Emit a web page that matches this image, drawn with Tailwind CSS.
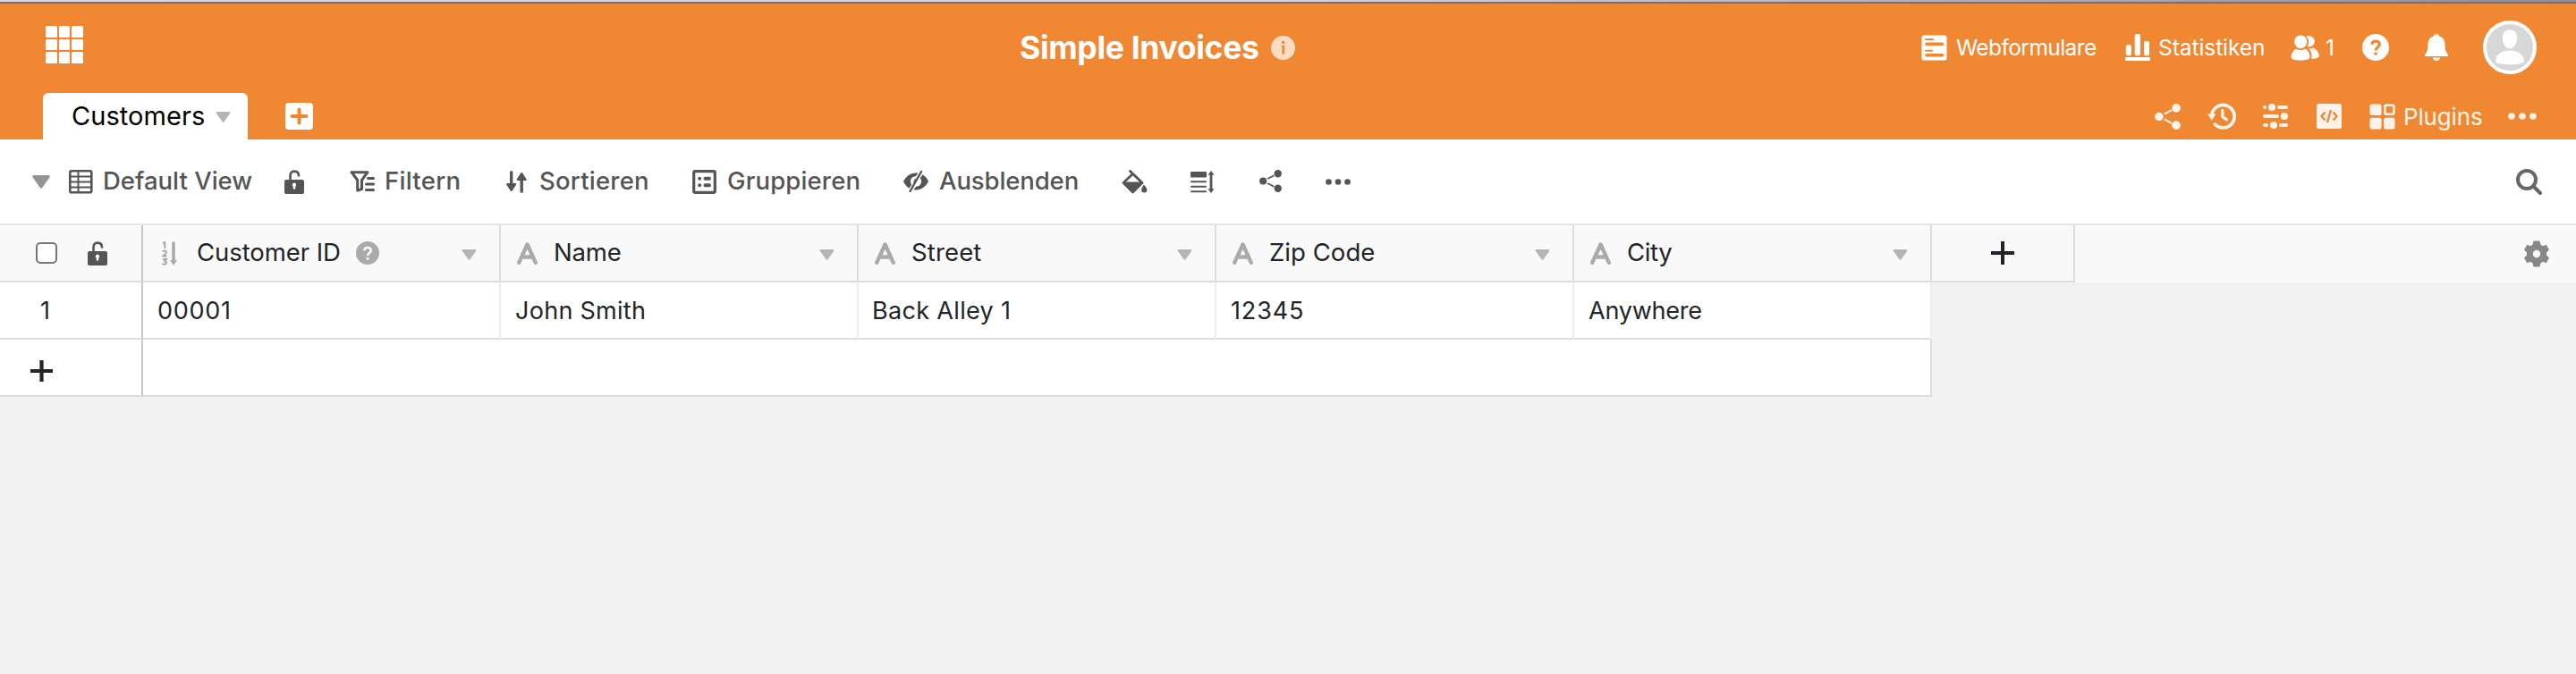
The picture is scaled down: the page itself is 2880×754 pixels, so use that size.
<!DOCTYPE html>
<html lang="de">
<head>
<meta charset="utf-8">
<title>Simple Invoices</title>
<script src="https://cdn.jsdelivr.net/npm/@tailwindcss/browser@4"></script>
</head>
<body class="w-[2880px] h-[754px] overflow-hidden bg-[#f2f2f2] font-['Inter',sans-serif] text-[#212529] whitespace-nowrap">

<svg class="hidden">
  <symbol id="caret" viewBox="0 0 20 15"><path d="M1.6 0H18.4Q20.6 .6 19.4 2.6L11.2 14Q10 15.4 8.800 14L.6 2.600Q-.6 .6 1.600 0Z"/></symbol>
  <symbol id="share" viewBox="0 0 28 28"><path d="M5 14 23 4.500M5 14 23 23.500" stroke="currentColor" stroke-width="2" stroke-dasharray="0 6 9 20" fill="none"/><circle cx="4.700" cy="14" r="4.600"/><circle cx="23.200" cy="4.700" r="4.700"/><circle cx="23.200" cy="23.300" r="4.700"/></symbol>
  <symbol id="dots" viewBox="0 0 32 8"><circle cx="4" cy="4" r="3.800"/><circle cx="16" cy="4" r="3.800"/><circle cx="28" cy="4" r="3.800"/></symbol>
  <symbol id="lock" viewBox="0 0 22 27"><path d="M6.500 12V7Q6.500 1.600 11.200 1.600T16 6.500V7.500" fill="none" stroke="currentColor" stroke-width="2.600"/><path fill-rule="evenodd" d="M2 11H20Q22 11 22 13V25Q22 27 20 27H2Q0 27 0 25V13Q0 11 2 11ZM11 14.500A2.300 2.300 0 0 0 9.800 18.700V21.600H12.200V18.700A2.300 2.300 0 0 0 11 14.500Z"/></symbol>
  <symbol id="letter" viewBox="0 0 23 25"><path d="M2.200 22.800 11.500 2.500 20.800 22.800M6 16.500H17" fill="none" stroke="currentColor" stroke-width="4.400" stroke-linecap="round" stroke-linejoin="round"/></symbol>
</svg>

<div class="h-[2px] bg-linear-to-r from-[#d8d8d8] via-[#d4d4d4] to-[#909090]"></div>
<div class="h-[2px] bg-[#717275]"></div>

<header class="h-[152px] bg-[#f08833] text-white fill-current">
  <div class="flex h-[98px] items-center pl-[51px]">
    <div class="w-[1089px] shrink-0">
      <div class="-mt-[6px] grid size-[42px] grid-cols-3 gap-[2px]">
        <i class="rounded-[1.5px] bg-white"></i><i class="rounded-[1.5px] bg-white"></i><i class="rounded-[1.5px] bg-white"></i>
        <i class="rounded-[1.5px] bg-white"></i><i class="rounded-[1.5px] bg-white"></i><i class="rounded-[1.5px] bg-white"></i>
        <i class="rounded-[1.5px] bg-white"></i><i class="rounded-[1.5px] bg-white"></i><i class="rounded-[1.5px] bg-white"></i>
      </div>
    </div>
    <h1 class="w-[281px] shrink-0 pt-[2px] text-[35.5px] font-bold tracking-[-0.31px]">Simple Invoices</h1>
    <div class="w-[727px] shrink-0">
      <svg class="mt-px size-[27px]" viewBox="0 0 27 27"><circle cx="13.500" cy="13.500" r="13.500" fill="#fadcc3"/><g fill="#f08833"><circle cx="13.700" cy="7.500" r="1.700"/><path d="M11.700 10.800H15.200V20.500H12.400V12.500H11.700Z"/></g></svg>
    </div>
    <div class="w-[39px] shrink-0">
      <svg class="size-[29px]" viewBox="0 0 29 29"><rect x=".5" y=".5" width="28" height="28" rx="2.500"/><g stroke="#f08833" stroke-linecap="round"><path d="M5 5H13M5 17.700H12" stroke-width="2"/><path d="M6 10.300H23.500M6 22.800H23.500" stroke-width="3.600"/></g></svg>
    </div>
    <span class="w-[189px] shrink-0 text-[24.500px] tracking-[-0.57px]">Webformulare</span>
    <div class="w-[37px] shrink-0">
      <svg class="h-[30px] w-[28px]" viewBox="0 0 28 30"><rect y="26" width="28" height="4" rx=".6"/><rect x=".8" y="12" width="6" height="12.300" rx="2"/><rect x="10.700" y="0" width="6.200" height="24.300" rx="2"/><rect x="21" y="8" width="6" height="16.300" rx="2"/></svg>
    </div>
    <span class="w-[148px] shrink-0 text-[24.500px] tracking-[-0.06px]">Statistiken</span>
    <div class="w-[39px] shrink-0">
      <svg class="h-[29px] w-[32px]" viewBox="0 0 32 29"><path d="M11.200 .5C15.300 .5 18.200 3.400 18.200 7.500C18.200 11.900 15 15.200 11.200 15.200S4.200 11.900 4.200 7.500C4.200 3.400 7.100 .5 11.200 .5ZM5.800 15.800Q11 18.500 16.500 15.800C20 18 21.500 21.200 21.500 25C21.500 27.500 16.500 28.500 11 28.500S.5 27.500 .5 25C.5 21.200 2.500 17.800 5.800 15.800ZM17 1.700C22.500 .3 26.800 3 26.800 7.300C26.800 10.700 24 13.300 20.700 13.400L18.500 12.500C21.300 9 20.800 4.500 17 1.700ZM19.800 15.300C22 16 23.600 15.600 25.300 14.500C29.500 16.600 31.500 19.800 31.800 23.200C31.800 25.600 28 26.800 23.300 26.900C24.200 22 23 18.300 19.800 15.300Z"/></svg>
    </div>
    <span class="w-[41px] shrink-0 text-[24.500px]">1</span>
    <div class="w-[70px] shrink-0">
      <svg class="size-[30px]" viewBox="0 0 30 30"><circle cx="15" cy="15" r="15"/><path d="M11 11.800C11 9.700 12.600 8.200 15.200 8.200S19.300 9.700 19.300 11.800C19.300 14.500 15.200 14.600 15.200 18.500" fill="none" stroke="#f08833" stroke-width="3.200"/><rect x="13.400" y="20.500" width="3.400" height="3" fill="#f08833"/></svg>
    </div>
    <div class="w-[65px] shrink-0">
      <svg class="h-[30px] w-[26px]" viewBox="0 0 26 30"><path d="M13 0C14.800 0 16 1.200 16 2.500C20.500 3.800 22.500 7 22.500 11.500C22.500 17.500 23 19 26 23.300V25H0V23.300C3 19 3.500 17.500 3.500 11.500C3.500 7 5.500 3.800 10 2.500C10 1.200 11.200 0 13 0ZM8.800 26.500H17.200Q16 30 13 30T8.800 26.500Z"/></svg>
    </div>
    <svg class="size-[60px] shrink-0" viewBox="0 0 60 60"><circle cx="30" cy="30" r="28" fill="#d7d7d7" stroke="#fff" stroke-width="4"/><path d="M30 10.200C35 10.200 38.200 14 38.200 19.500C38.200 26 34.500 31.300 30 31.300S21.800 26 21.800 19.500C21.800 14 25 10.200 30 10.200ZM30 33.500C40 33.500 46 39 46 45C46 48 39 49.200 30 49.200S14 48 14 45C14 39 20 33.500 30 33.500Z"/></svg>
  </div>

  <div class="mt-[2px] flex h-[52px] items-center pl-[48px]">
    <div class="flex h-full w-[229px] shrink-0 items-center rounded-t-[6px] bg-white pl-[32px] text-black">
      <span class="w-[161px] text-[29px] tracking-[0.07px]">Customers</span>
      <svg class="mt-px h-[12px] w-[17px] text-[#b5b5b5] fill-current"><use href="#caret"/></svg>
    </div>
    <svg class="ml-[42px] h-[30px] w-[31px] shrink-0" viewBox="0 0 31 30"><rect width="31" height="30" rx="4"/><path d="M15.500 7.500V22.500M7.500 15H23.500" stroke="#f08833" stroke-width="4" stroke-linecap="round"/></svg>
    <div class="ml-[2059px] flex items-center opacity-90">
      <div class="w-[59px] shrink-0"><svg class="size-[29px]"><use href="#share"/></svg></div>
      <div class="w-[62px] shrink-0">
        <svg class="h-[30px] w-[32px]" viewBox="0 0 32 30"><path d="M4.800 14A12.700 12.700 0 1 1 8.300 24" fill="none" stroke="currentColor" stroke-width="3.800" stroke-linecap="round"/><path d="M0 12.500H9.500L4.800 19.500Z"/><path d="M16.800 8.500V15.500L21.500 19" fill="none" stroke="currentColor" stroke-width="3.400" stroke-linecap="round" stroke-linejoin="round"/></svg>
      </div>
      <div class="w-[60px] shrink-0">
        <svg class="size-[28px]" viewBox="0 0 28 28"><g stroke="currentColor" stroke-width="4" stroke-linecap="round"><path d="M2 4H2.100M18 4H26M2 14H16M2 24H4M20 24H26"/></g><circle cx="10" cy="4" r="4"/><circle cx="23.900" cy="14" r="4.100"/><circle cx="12" cy="24" r="4"/></svg>
      </div>
      <div class="w-[59px] shrink-0">
        <svg class="size-[28px]" viewBox="0 0 28 28"><rect width="28" height="28" rx="2.500"/><path d="M9.500 9.500 5.500 14 9.500 18.500M18.500 9.500 22.500 14 18.500 18.500M16 7 12 21" fill="none" stroke="#f08833" stroke-width="2.400"/></svg>
      </div>
      <div class="w-[38px] shrink-0">
        <svg class="size-[29px]" viewBox="0 0 29 29"><rect x=".5" y=".5" width="13" height="12.500" rx="2.500"/><rect x=".5" y="15.700" width="13" height="12.800" rx="2.500"/><rect x="16" y="15.700" width="12.500" height="12.800" rx="2.500"/><rect x="17.300" y="1.800" width="10" height="10" rx="1.500" fill="none" stroke="currentColor" stroke-width="2.600"/></svg>
      </div>
      <span class="w-[117px] shrink-0 text-[26px] tracking-[-0.15px]">Plugins</span>
      <svg class="h-[8px] w-[32px]"><use href="#dots"/></svg>
    </div>
  </div>
</header>

<nav class="flex h-[94px] items-center bg-white pl-[36px] text-[27.500px] font-medium text-[#555] fill-current">
  <div class="w-[41px] shrink-0"><svg class="h-[15px] w-[20px] text-[#949494] fill-current"><use href="#caret"/></svg></div>
  <div class="w-[38px] shrink-0">
    <svg class="size-[27px]" viewBox="0 0 27 27"><rect x="1.300" y="1.300" width="24" height="24" rx="1.500" fill="none" stroke="currentColor" stroke-width="2.600"/><path d="M2 7.500H25M2 13.500H25M2 19.500H25" stroke="currentColor" stroke-width="2.200"/><path d="M10.500 2V25" stroke="currentColor" stroke-width="2"/></svg>
  </div>
  <span class="w-[203px] shrink-0">Default View</span>
  <div class="w-[73px] shrink-0"><svg class="h-[27px] w-[22px]"><use href="#lock"/></svg></div>
  <div class="w-[39px] shrink-0">
    <svg class="h-[24px] w-[29px]" viewBox="0 0 29 24"><path d="M2 1.700H20L13.500 10.500V20.500L8.700 22V10.500Z" fill="none" stroke="currentColor" stroke-width="3" stroke-linejoin="round"/><path d="M20.500 8.500H26.500M18.500 15H26.500M18.500 21.500H26.500" stroke="currentColor" stroke-width="3" stroke-linecap="round"/></svg>
  </div>
  <span class="w-[136px] shrink-0 tracking-[0.3px]">Filtern</span>
  <div class="w-[37px] shrink-0">
    <svg class="h-[25px] w-[23px]" viewBox="0 0 23 25"><path d="M4 1.500Q4 .3 5.700 .3T7.400 1.500V14H10.700Q11.500 14.800 11 15.800L6.800 22.300Q5.700 23.500 4.600 22.300L.4 15.800Q-.1 14.800 .7 14H4ZM15.500 23.500Q15.500 24.700 17.200 24.700T18.900 23.500V11H22.200Q23 10.200 22.500 9.200L18.300 2.700Q17.200 1.500 16.100 2.700L11.900 9.200Q11.400 10.200 12.200 11H15.500Z"/></svg>
  </div>
  <span class="w-[171px] shrink-0 tracking-[0.23px]">Sortieren</span>
  <div class="w-[39px] shrink-0">
    <svg class="size-[27px]" viewBox="0 0 27 27"><rect x="1.700" y="1.700" width="23.600" height="23.600" rx="1.500" fill="none" stroke="currentColor" stroke-width="3.200"/><circle cx="8.200" cy="9.700" r="2"/><circle cx="8.200" cy="17.300" r="2"/><path d="M14.500 9.700H19M14.500 17.300H19" stroke="currentColor" stroke-width="4" stroke-linecap="round"/></svg>
  </div>
  <span class="w-[197px] shrink-0 tracking-[0.15px]">Gruppieren</span>
  <div class="w-[40px] shrink-0">
    <svg class="h-[24px] w-[28px]" viewBox="0 0 28 24"><path d="M0 12Q5 2.500 14 2.500H16.500L13.800 6.300Q8 6.500 8 12Q8 14.500 9.200 16L6.200 19.700Q2 16.800 0 12ZM28 12Q23 21.500 14 21.500H11.500L14 17.700Q20 17.500 20 12Q20 9.500 18.800 8L21.800 4.300Q26 7.200 28 12ZM15.500 8.500Q11 9 11.500 13.800Z"/><path d="M20 1 7.500 23" stroke="currentColor" stroke-width="2.400" stroke-linecap="round"/></svg>
  </div>
  <span class="w-[204px] shrink-0 tracking-[-0.11px]">Ausblenden</span>
  <div class="w-[77px] shrink-0">
    <svg class="h-[27px] w-[29px]" viewBox="0 0 29 27"><path d="M9.500 1.500 23 14.500 12.500 25 2 14.500 12.500 4.500" fill="none" stroke="currentColor" stroke-width="2.800" stroke-linejoin="round" stroke-linecap="round"/><path d="M2 13.500H23L12.500 25.500ZM24.800 16.500Q28.500 20.500 28.500 23Q28 25.500 25.300 25.500T22 23Q22.300 20 24.800 16.500Z"/></svg>
  </div>
  <div class="w-[77px] shrink-0">
    <svg class="h-[25px] w-[27px]" viewBox="0 0 27 25"><rect y="1" width="18" height="6.500" rx="1"/><path d="M1 12.200H17M1 17.700H17M1 23.200H17" stroke="currentColor" stroke-width="2" stroke-linecap="round"/><path d="M23 3V22" stroke="currentColor" stroke-width="2.800"/><path d="M23 0 26.500 4.800H19.500ZM23 25 26.500 20.200H19.500Z"/></svg>
  </div>
  <div class="w-[74px] shrink-0"><svg class="mb-px size-[25px]"><use href="#share"/></svg></div>
  <div class="w-[1331px] shrink-0"><svg class="h-[7px] w-[28px]"><use href="#dots"/></svg></div>
  <svg class="size-[29px] shrink-0 text-[#666]" viewBox="0 0 29 29" fill="none" stroke="currentColor"><circle cx="12" cy="12" r="10" stroke-width="4"/><path d="M19.500 19.500 27 27" stroke-width="4" stroke-linecap="round"/></svg>
</nav>

<main class="border-t-2 border-[#e5e8eb] text-[27px] fill-current">
  <div class="flex h-[64px] bg-[#f9f9f9] text-[27.500px]">
    <div class="flex w-[160px] shrink-0 items-center border-r-2 border-b-2 border-[#ddd] border-r-[#c9c9c9] pl-[40px]">
      <div class="size-[24px] rounded-[5px] border-2 border-[#767676] bg-white"></div>
      <svg class="ml-[34px] h-[27px] w-[22px] text-[#555]"><use href="#lock"/></svg>
    </div>
    <div class="flex w-[400px] shrink-0 items-center border-r-2 border-b-2 border-[#ddd] pl-[21px]">
      <div class="w-[39px] shrink-0 text-[#aaa]">
        <svg class="h-[27px] w-[18px]" viewBox="0 0 18 27"><path d="M1 2.200 3.200 1V8M.8 11.800Q1.200 10.600 3 10.600T5 12Q5 13.200 1 16.600H5.500M1 20H5L3.200 22.200Q5.200 22.600 5 24.200T2.900 25.700T.7 24.600" fill="none" stroke="currentColor" stroke-width="2"/><path d="M13 2V22" stroke="currentColor" stroke-width="3.600" stroke-linecap="round"/><path d="M9 21H17L13 27Z"/></svg>
      </div>
      <span class="w-[178px] shrink-0 tracking-[-0.07px]">Customer ID</span>
      <svg class="size-[26px] text-[#aaa]" viewBox="0 0 26 26"><circle cx="13" cy="13" r="13"/><path d="M9.300 10.200C9.300 8.200 10.800 7 13.100 7S16.800 8.300 16.800 10.200C16.800 12.800 13.100 13 13.100 16.300" fill="none" stroke="#f9f9f9" stroke-width="2.600"/><rect x="11.700" y="18" width="2.800" height="2.600" fill="#f9f9f9"/></svg>
      <svg class="mt-[3px] mr-[25px] ml-auto h-[12px] w-[17px] text-[#b5b5b5] fill-current"><use href="#caret"/></svg>
    </div>
    <div class="flex w-[400px] shrink-0 items-center border-r-2 border-b-2 border-[#ddd] pl-[18px]">
      <svg class="mr-[18px] h-[25px] w-[23px] text-[#aaa]"><use href="#letter"/></svg><span class="tracking-[-0.18px]">Name</span>
      <svg class="mt-[3px] mr-[25px] ml-auto h-[12px] w-[17px] text-[#b5b5b5] fill-current"><use href="#caret"/></svg>
    </div>
    <div class="flex w-[400px] shrink-0 items-center border-r-2 border-b-2 border-[#ddd] pl-[18px]">
      <svg class="mr-[18px] h-[25px] w-[23px] text-[#aaa]"><use href="#letter"/></svg><span class="tracking-[0.14px]">Street</span>
      <svg class="mt-[3px] mr-[25px] ml-auto h-[12px] w-[17px] text-[#b5b5b5] fill-current"><use href="#caret"/></svg>
    </div>
    <div class="flex w-[400px] shrink-0 items-center border-r-2 border-b-2 border-[#ddd] pl-[18px]">
      <svg class="mr-[18px] h-[25px] w-[23px] text-[#aaa]"><use href="#letter"/></svg><span class="tracking-[0.05px]">Zip Code</span>
      <svg class="mt-[3px] mr-[25px] ml-auto h-[12px] w-[17px] text-[#b5b5b5] fill-current"><use href="#caret"/></svg>
    </div>
    <div class="flex w-[400px] shrink-0 items-center border-r-2 border-b-2 border-[#ddd] pl-[18px]">
      <svg class="mr-[18px] h-[25px] w-[23px] text-[#aaa]"><use href="#letter"/></svg><span class="tracking-[-0.33px]">City</span>
      <svg class="mt-[3px] mr-[25px] ml-auto h-[12px] w-[17px] text-[#b5b5b5] fill-current"><use href="#caret"/></svg>
    </div>
    <div class="flex w-[160px] shrink-0 items-center justify-center border-r-2 border-b-2 border-[#ddd]">
      <svg class="size-[26px]" viewBox="0 0 26 26"><path d="M13 0V26M0 13H26" stroke="currentColor" stroke-width="4"/></svg>
    </div>
    <svg class="mt-[17px] ml-[502px] h-[30px] w-[28px] shrink-0 text-[#888]" viewBox="-14 -15 28 30"><path fill-rule="evenodd" d="M-3.500 -14.500H3.500L4.500 -10.200 7 -8.800 10.800 -10.200 14 -4.500 11 -1.500V1.500L14 4.500 10.800 10.200 7 8.800 4.500 10.200 3.500 14.500H-3.500L-4.500 10.200 -7 8.800 -10.800 10.200 -14 4.500 -11 1.500V-1.500L-14 -4.500 -10.800 -10.200 -7 -8.800 -4.500 -10.200ZM0 -4.200A4.200 4.200 0 1 0 0 4.200A4.200 4.200 0 1 0 0 -4.200Z"/></svg>
  </div>

  <div class="flex h-[64px] w-[2160px] *:flex *:shrink-0 *:items-center *:border-b-2 *:bg-white *:pt-[2px]">
    <div class="w-[160px] border-r-2 border-[#ddd] border-r-[#c9c9c9] pl-[45px]">1</div>
    <div class="w-[400px] border-r-2 border-[#ddd] border-r-[#eee] pl-[16px] tracking-[0.72px]">00001</div>
    <div class="w-[400px] border-r-2 border-[#ddd] border-r-[#eee] pl-[16px] tracking-[0.28px]">John Smith</div>
    <div class="w-[400px] border-r-2 border-[#ddd] border-r-[#eee] pl-[15px] tracking-[0.33px]">Back Alley 1</div>
    <div class="w-[400px] border-r-2 border-[#ddd] border-r-[#eee] pl-[16px] tracking-[0.86px]">12345</div>
    <div class="w-[400px] border-r-2 border-[#ddd] border-r-[#eee] pl-[16px] tracking-[-0.23px]">Anywhere</div>
  </div>

  <div class="flex h-[64px] w-[2160px]">
    <div class="flex w-[160px] shrink-0 items-center border-r-2 border-b-2 border-[#ddd] border-r-[#c9c9c9] bg-white pt-[8px] pl-[34px]">
      <svg class="h-[24px] w-[25px]" viewBox="0 0 25 24"><path d="M12.500 0V24M0 12H25" stroke="currentColor" stroke-width="4.200"/></svg>
    </div>
    <div class="flex-1 border-r-2 border-b-2 border-[#ddd] bg-white"></div>
  </div>
</main>
</body>
</html>
